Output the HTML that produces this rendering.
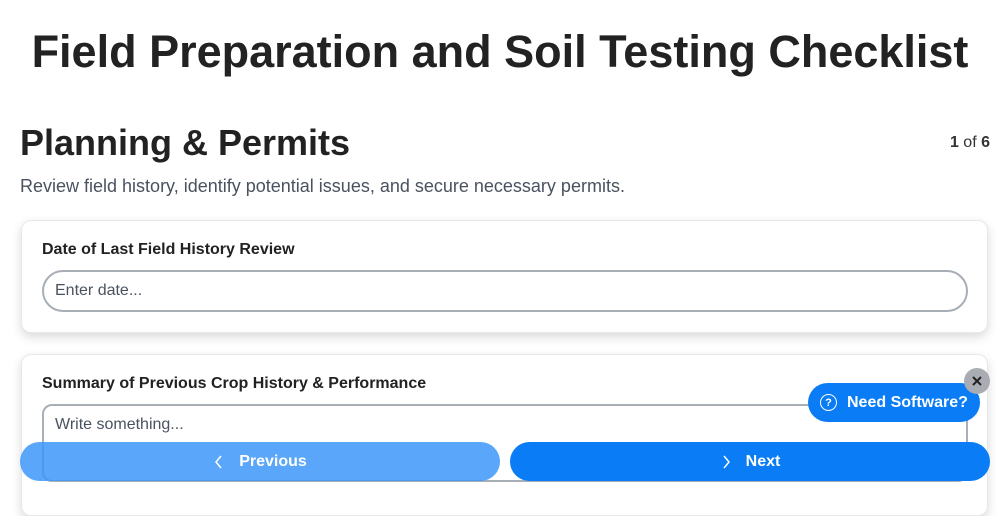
<!DOCTYPE html>
<html><head><style>
body{margin:0;width:1000px;height:500px;overflow:hidden;background:#fff;font-family:"Liberation Sans",sans-serif;color:#1f2328;position:relative}
h1{position:absolute;left:0;width:1000px;top:26px;margin:0;text-align:center;font-size:45px;font-weight:bold;color:#222}
h2{position:absolute;left:20px;top:122px;margin:0;font-size:36px;font-weight:bold;color:#222}
.cnt{position:absolute;right:10px;top:134px;font-size:16px;color:#333}
.desc{position:absolute;left:20px;top:176px;font-size:18px;color:#4a5260}
.card{position:absolute;left:21px;width:965px;background:#fff;border:1px solid #e8e8ec;border-radius:10px;box-shadow:0 4px 10px rgba(0,0,0,.15)}
.lbl{position:absolute;left:20px;font-size:16px;font-weight:bold;color:#222}
.inp{position:absolute;left:20px;width:926px;border:2px solid #a8aeb6;color:#4a5260;font-size:16px;box-sizing:border-box;padding-left:11px}
.btn{position:absolute;top:442px;height:39px;border-radius:20px;color:#fff;font-weight:bold;font-size:16px;display:flex;align-items:center;justify-content:center}
.btn svg{margin-right:14px}
</style></head><body>
<h1>Field Preparation and Soil Testing Checklist</h1>
<h2>Planning &amp; Permits</h2>
<div class="cnt"><b>1</b> of <b>6</b></div>
<div class="desc">Review field history, identify potential issues, and secure necessary permits.</div>
<div class="card" style="top:220px;height:111px">
<div class="lbl" style="top:20px">Date of Last Field History Review</div>
<div class="inp" style="top:49px;height:42px;border-radius:21px;line-height:38px">Enter date...</div>
</div>
<div class="card" style="top:354px;height:160px">
<div class="lbl" style="top:20px">Summary of Previous Crop History &amp; Performance</div>
<div class="inp" style="top:49px;height:78px;border-radius:10px;padding-top:10px">Write something...</div>
</div>
<div class="btn" style="left:20px;width:480px;background:rgba(60,150,250,.85)"><svg width="12" height="16" viewBox="0 0 12 16"><path d="M8 2 L3 8 L8 14" fill="none" stroke="#fff" stroke-width="1.5"/></svg>Previous</div>
<div class="btn" style="left:510px;width:480px;background:#0a7cf5"><svg width="12" height="16" viewBox="0 0 12 16"><path d="M4 2 L9 8 L4 14" fill="none" stroke="#fff" stroke-width="1.5"/></svg>Next</div>
<div style="position:absolute;left:808px;top:383px;width:172px;height:39px;border-radius:20px;background:#0a7cf5;color:#fff;font-weight:bold;font-size:16px;display:flex;align-items:center">
<span style="margin-left:12px;width:15px;height:15px;border:1.5px solid #fff;border-radius:50%;font-size:11px;display:inline-flex;align-items:center;justify-content:center;margin-right:10px">?</span>Need Software?</div>
<div style="position:absolute;left:964px;top:368px;width:26px;height:26px;border-radius:50%;background:#a9adb3"><svg width="26" height="26" viewBox="0 0 26 26"><path d="M9 9 L17 17 M17 9 L9 17" stroke="#222" stroke-width="2"/></svg></div>
</body></html>
